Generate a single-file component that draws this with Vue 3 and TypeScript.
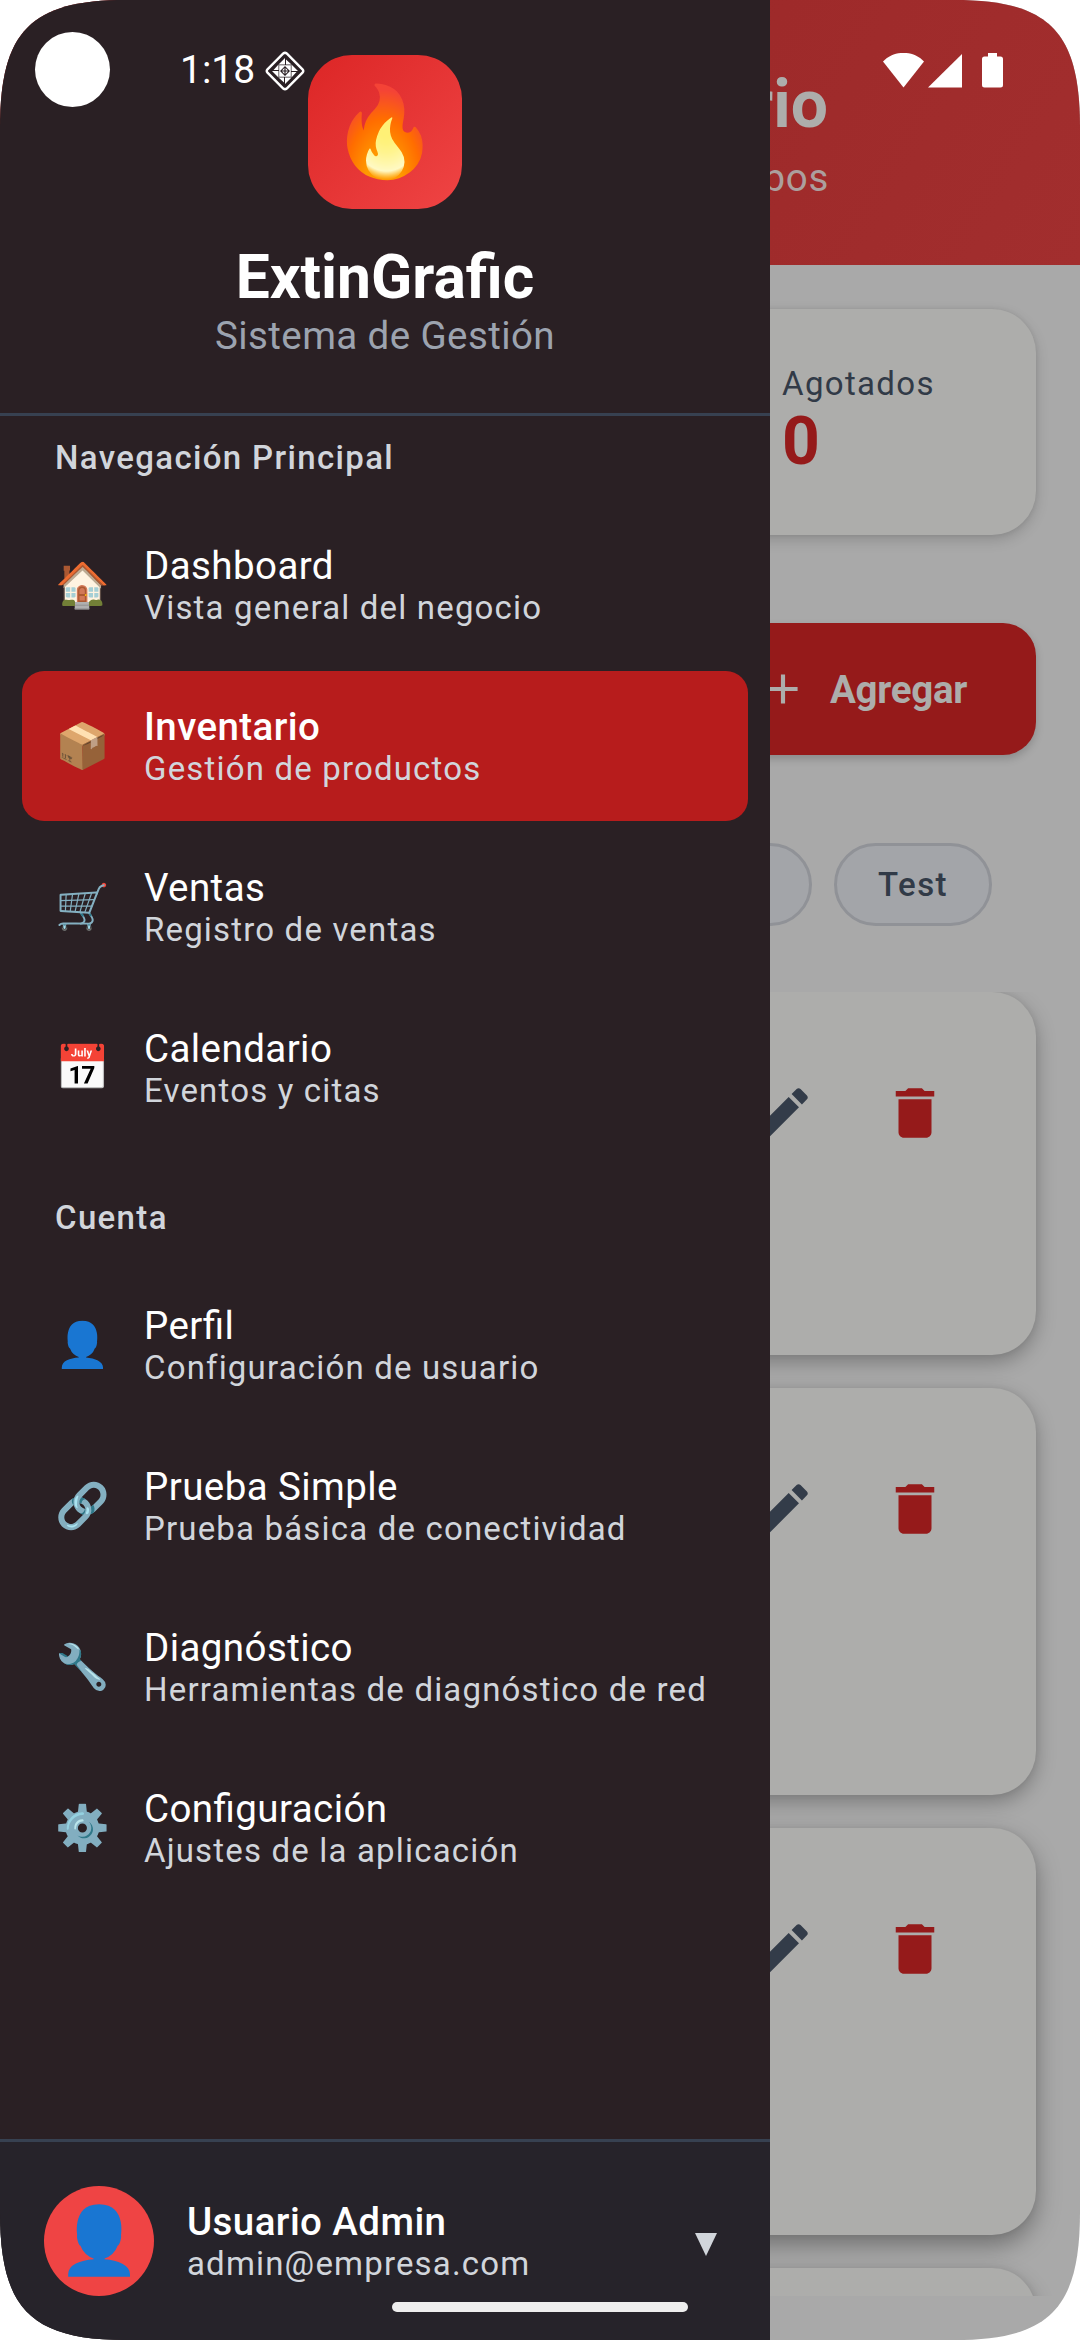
<script setup lang="ts">
interface NavItem {
  icon: string
  title: string
  subtitle: string
  active?: boolean
}

const sections: { label: string; items: NavItem[] }[] = [
  {
    label: 'Navegación Principal',
    items: [
      { icon: '🏠', title: 'Dashboard', subtitle: 'Vista general del negocio' },
      { icon: '📦', title: 'Inventario', subtitle: 'Gestión de productos', active: true },
      { icon: '🛒', title: 'Ventas', subtitle: 'Registro de ventas' },
      { icon: '📅', title: 'Calendario', subtitle: 'Eventos y citas' },
    ],
  },
  {
    label: 'Cuenta',
    items: [
      { icon: '👤', title: 'Perfil', subtitle: 'Configuración de usuario' },
      { icon: '🔗', title: 'Prueba Simple', subtitle: 'Prueba básica de conectividad' },
      { icon: '🔧', title: 'Diagnóstico', subtitle: 'Herramientas de diagnóstico de red' },
      { icon: '⚙️', title: 'Configuración', subtitle: 'Ajustes de la aplicación' },
    ],
  },
]

const products = [1, 2, 3, 4]
</script>

<template>
  <div class="screen">
    <main class="page">
      <header class="page-header">
        <h1>Inventario</h1>
        <p>equipos</p>
      </header>
      <section class="stat-card">
        <div class="stat">
          <span class="stat-label">Agotados</span>
          <strong class="stat-value">0</strong>
        </div>
      </section>
      <button class="add-button">
        <svg viewBox="0 0 24 24" width="50" height="50"><path fill="currentColor" d="M19 13h-6v6h-2v-6H5v-2h6V5h2v6h6z" /></svg>
        <span>Agregar</span>
      </button>
      <div class="chips">
        <span class="chip"></span>
        <span class="chip chip-test">Test</span>
      </div>
      <div class="list">
        <article v-for="p in products" :key="p" class="product" :class="'product-' + p">
          <button class="icon-button edit">
            <svg viewBox="0 0 24 24" width="66" height="66"><path fill="currentColor" d="M3 17.25V21h3.75L17.81 9.94l-3.75-3.75L3 17.25zM20.71 7.04c.39-.39.39-1.02 0-1.41l-2.34-2.34c-.39-.39-1.02-.39-1.41 0l-1.83 1.83 3.75 3.75 1.83-1.83z" /></svg>
          </button>
          <button class="icon-button delete">
            <svg viewBox="0 0 24 24" width="66" height="66"><path fill="currentColor" d="M6 19c0 1.1.9 2 2 2h8c1.1 0 2-.9 2-2V7H6v12zM19 4h-3.5l-1-1h-5l-1 1H5v2h14V4z" /></svg>
          </button>
        </article>
      </div>
    </main>

    <aside class="drawer">
      <div class="brand">
        <div class="logo"><span>🔥</span></div>
        <h2>ExtinGrafic</h2>
        <p>Sistema de Gestión</p>
      </div>
      <nav>
        <section v-for="s in sections" :key="s.label" class="group">
          <h3>{{ s.label }}</h3>
          <a v-for="i in s.items" :key="i.title" class="item" :class="{ active: i.active }">
            <span class="emoji">{{ i.icon }}</span>
            <span class="texts">
              <span class="title">{{ i.title }}</span>
              <span class="subtitle">{{ i.subtitle }}</span>
            </span>
          </a>
        </section>
      </nav>
      <footer class="user">
        <div class="avatar">👤</div>
        <div class="texts">
          <span class="title">Usuario Admin</span>
          <span class="subtitle">admin@empresa.com</span>
        </div>
        <svg class="caret" viewBox="0 0 22 23" width="22" height="23"><path fill="#d1d5db" d="M0 0h22L11 23z" /></svg>
      </footer>
    </aside>

    <div class="status">
      <span class="camera"></span>
      <span class="clock">1:18</span>
      <svg class="debug" viewBox="0 0 40 40" width="40" height="40">
        <path fill="none" stroke="#fff" stroke-width="2.4" d="M18.300 2.500q1.700-1.500 3.400 0L37.500 18.300q1.500 1.700 0 3.400L21.700 37.500q-1.700 1.500-3.400 0L2.500 21.700q-1.500-1.700 0-3.400z" />
        <g fill="#fff">
          <path d="M20 7v6.500h-6.500zM21 8.500l5.500 5H21z" />
          <path d="M33 20h-6.500v-6.500zM31.500 21l-5 5.500V21z" />
          <path d="M20 33v-6.500h6.500zM19 31.500l-5.500-5H19z" />
          <path d="M7 20h6.500v6.500zM8.500 19l5-5.500V19z" />
          <path fill-rule="evenodd" d="M14.200 14.200h11.600v11.600H14.200zM20 15l5 5-5 5-5-5z" />
          <path d="M19.400 17v2.400H17zM23 19.400h-2.400V17zM20.600 23v-2.400H23zM17 20.600h2.400V23z" />
        </g>
      </svg>
      <svg class="signals" viewBox="0 0 122 36" width="122" height="36">
        <path fill="#fff" d="M0 8.500C11-3 30-3 41 8.500L20.500 34.500z" />
        <path fill="#fff" d="M79 1v33.500H45z" />
        <path fill="#fff" d="M105 0h9v3.500h3.500q2.500 0 2.500 2.500v26q0 2.500-2.500 2.500h-16q-2.500 0-2.500-2.500V6q0-2.500 2.500-2.500h3.500z" />
      </svg>
    </div>
    <div class="home-bar"></div>
  </div>
</template>

<style>
body {
  margin: 0;
  background: #fff;
}
</style>

<style scoped>
.screen {
  position: relative;
  width: 1080px;
  height: 2340px;
  overflow: hidden;
  background: #a9a9a9;
  font-family: Roboto, 'Liberation Sans', sans-serif;
  clip-path: path('M0 128C0 31 31 0 126 0H954C1049 0 1080 31 1080 128V2212C1080 2309 1049 2340 954 2340H126C31 2340 0 2309 0 2212Z');
}
h1, h2, h3, p { margin: 0; }
button { border: 0; padding: 0; font: inherit; background: none; }
svg { display: block; flex: none; }

.page {
  display: flex;
  flex-direction: column;
  height: 2296px;
  overflow: hidden;
}
.page-header {
  flex: none;
  height: 265px;
  box-sizing: border-box;
  padding: 66px 252px 0 0;
  text-align: right;
  background: linear-gradient(120deg, #961a1a, #9d2929 55%, #a22e2e);
  color: #adadab;
}
.page-header h1 {
  font-size: 66px;
  line-height: 77px;
  font-weight: 700;
}
.page-header p {
  margin: 12px -1px 0 0;
  font-size: 38.5px;
  line-height: 45px;
  letter-spacing: 0.7px;
  color: #ac9f9e;
}
.stat-card {
  flex: none;
  display: flex;
  justify-content: flex-end;
  box-sizing: border-box;
  height: 226px;
  margin: 44px 44px 0;
  padding: 55px 0;
  border-radius: 44px;
  background: #adadab;
  box-shadow: 0 5px 14px rgba(0, 0, 0, 0.16), 0 0 5px rgba(0, 0, 0, 0.08);
}
.stat {
  width: 254px;
  display: flex;
  flex-direction: column;
}
.stat-label {
  font-size: 33px;
  line-height: 39px;
  letter-spacing: 1.35px;
  color: #313a47;
}
.stat-value {
  font-size: 66px;
  line-height: 77px;
  font-weight: 700;
  color: #951a1a;
}
.add-button {
  flex: none;
  display: flex;
  align-items: center;
  justify-content: flex-end;
  gap: 22px;
  box-sizing: border-box;
  height: 132px;
  margin: 88px 44px 0;
  padding-right: 69px;
  border-radius: 33px;
  background: #951a1a;
  color: #adadab;
  box-shadow: 0 4px 9px rgba(0, 0, 0, 0.18);
  font-size: 38.5px;
  font-weight: 700;
  letter-spacing: -0.3px;
}
.chips {
  flex: none;
  display: flex;
  justify-content: flex-end;
  gap: 22px;
  margin: 88px 88px 0 0;
}
.chip {
  box-sizing: border-box;
  width: 158px;
  height: 83px;
  border: 3px solid #909297;
  border-radius: 42px;
  background: #a3a5a9;
  color: #313a47;
  font-size: 33px;
  line-height: 77px;
  font-weight: 500;
  letter-spacing: 1.4px;
  text-align: center;
}
.list {
  display: flex;
  flex-direction: column;
  gap: 33px;
  flex: 1;
  min-height: 0;
  margin-top: 66px;
  padding: 0 44px;
  overflow: hidden;
}
.product {
  flex: none;
  display: flex;
  justify-content: flex-end;
  box-sizing: border-box;
  height: 407px;
  padding: 55px;
  border-radius: 44px;
  background: #adadab;
  box-shadow: 0 7px 20px rgba(0, 0, 0, 0.28), 0 0 6px rgba(0, 0, 0, 0.06);
}
.product-1 { height: 363px; }
.product-3 { box-shadow: 0 10px 24px rgba(0, 0, 0, 0.34), 0 0 6px rgba(0, 0, 0, 0.06); }
.icon-button {
  display: flex;
  align-items: center;
  justify-content: center;
  width: 132px;
  height: 132px;
}
.edit { color: #333c49; }
.delete { color: #951a1a; }

.drawer {
  position: absolute;
  inset: 0 auto 0 0;
  display: flex;
  flex-direction: column;
  width: 770px;
  background: #2a2024;
}
.brand {
  display: flex;
  flex-direction: column;
  align-items: center;
  padding: 55px 0;
  border-bottom: 3px solid #374151;
}
.logo {
  display: flex;
  align-items: center;
  justify-content: center;
  width: 154px;
  height: 154px;
  border-radius: 44px;
  background: linear-gradient(135deg, #dc2626, #ef4444);
  font-size: 88px;
  line-height: 1;
}
.brand h2 {
  margin-top: 33px;
  font-size: 60.5px;
  line-height: 71px;
  font-weight: 700;
  color: #fff;
}
.brand p {
  font-size: 38.5px;
  line-height: 45px;
  letter-spacing: 0.4px;
  color: #9ca3af;
}
nav {
  flex: 1;
  display: flex;
  flex-direction: column;
  gap: 55px;
  padding: 22px 22px 0;
}
.group {
  display: flex;
  flex-direction: column;
  gap: 11px;
}
.group h3 {
  margin-bottom: 22px;
  padding-left: 33px;
  font-size: 33px;
  line-height: 39px;
  font-weight: 500;
  letter-spacing: 1.35px;
  color: #d1d5db;
}
.item {
  display: flex;
  align-items: center;
  gap: 34px;
  height: 150px;
  padding-left: 33px;
  box-sizing: border-box;
  border-radius: 22px;
}
.item.active { background: #b71c1c; }
.emoji {
  width: 55px;
  font-size: 44px;
  line-height: 52px;
}
.texts {
  display: flex;
  flex-direction: column;
}
.title {
  font-size: 38.5px;
  line-height: 45px;
  letter-spacing: 0.42px;
  font-feature-settings: 'liga' 1;
  color: #fff;
}
.active .title, .user .title { font-weight: 500; }
.subtitle {
  font-size: 33px;
  line-height: 39px;
  letter-spacing: 1.17px;
  color: #d1d5db;
  white-space: nowrap;
}
.user {
  display: flex;
  align-items: center;
  gap: 33px;
  height: 198px;
  padding: 0 53px 0 44px;
  border-top: 3px solid #374151;
  background: #26232a;
}
.avatar {
  display: flex;
  align-items: center;
  justify-content: center;
  width: 110px;
  height: 110px;
  border-radius: 50%;
  background: #ef4444;
  font-size: 66px;
  line-height: 1;
}
.caret { margin: 7px 0 0 auto; }

.status {
  position: absolute;
  inset: 0 0 auto 0;
  height: 140px;
  display: flex;
  align-items: flex-start;
}
.camera {
  width: 75px;
  height: 75px;
  margin: 32px 0 0 35px;
  border-radius: 50%;
  background: #fff;
}
.clock {
  width: 76px;
  margin: 48px 0 0 70px;
  font-size: 39px;
  line-height: 45px;
  color: #fff;
}
.debug { margin: 51px 0 0 9px; }
.signals { margin: 53px 75px 0 auto; }
.home-bar {
  position: absolute;
  left: 392px;
  top: 2302px;
  width: 296px;
  height: 10px;
  border-radius: 5px;
  background: #eee;
}
</style>
